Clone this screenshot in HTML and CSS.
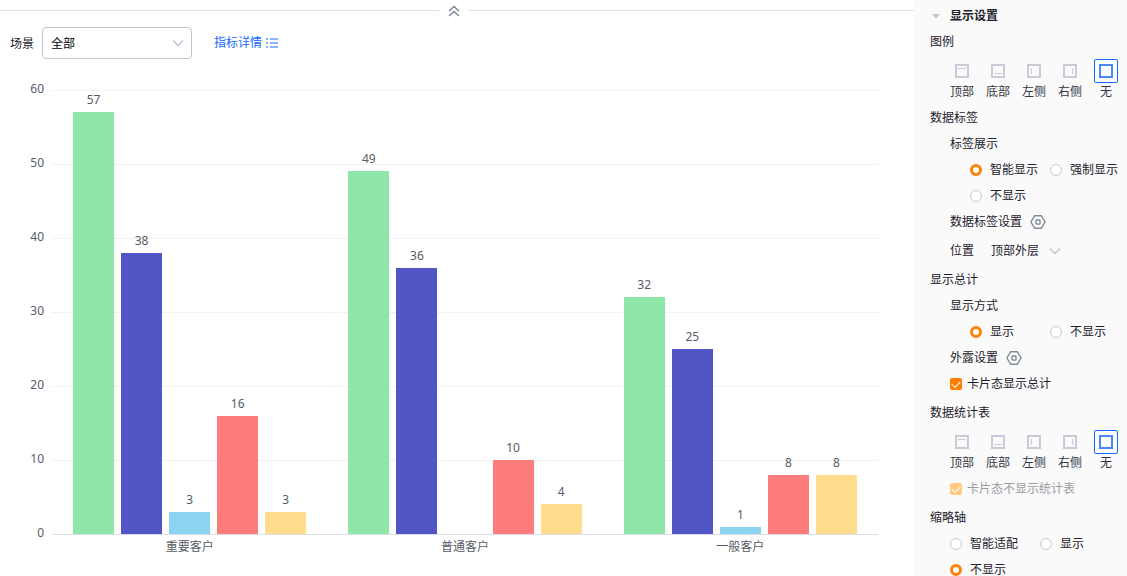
FILE: index.html
```
<!DOCTYPE html>
<html lang="zh">
<head>
    <meta charset="UTF-8">
    <meta name="viewport" content="width=device-width, initial-scale=1.0">
    <title>图表显示设置</title>
    <link rel="stylesheet" href="styles.css">
</head>
<body>
    <!-- 公用图标 -->
    <svg class="icon-defs" aria-hidden="true">
        <symbol id="icon-down" viewBox="0 0 12 8"><path d="M1 1.5l5 5 5-5"/></symbol>
        <symbol id="icon-set" viewBox="0 0 16 16"><path d="M4.6 1.7h6.8L15 8l-3.6 6.3H4.6L1 8z"/><circle cx="8" cy="8" r="2.2"/></symbol>
        <symbol id="icon-none" viewBox="0 0 14 14"><path d="M1 1h12v12H1z"/></symbol>
        <symbol id="icon-top" viewBox="0 0 14 14"><path d="M1 1h12v12H1z"/><path class="thin" d="M3 4.5h8"/></symbol>
        <symbol id="icon-bottom" viewBox="0 0 14 14"><path d="M1 1h12v12H1z"/><path class="thin" d="M3 9.5h8"/></symbol>
        <symbol id="icon-left" viewBox="0 0 14 14"><path d="M1 1h12v12H1z"/><path class="thin" d="M4.5 4v6"/></symbol>
        <symbol id="icon-right" viewBox="0 0 14 14"><path d="M1 1h12v12H1z"/><path class="thin" d="M9.5 4v6"/></symbol>
    </svg>

    <main class="main">
        <div class="divider">
            <button type="button" class="collapse" aria-label="收起">
                <svg width="12" height="12" viewBox="0 0 12 12"><path d="M1 6l5-4.5L11 6M1 11l5-4.5L11 11"/></svg>
            </button>
        </div>

        <div class="filter">
            <label for="scene">场景</label>
            <div class="select-box">
                <select id="scene"><option>全部</option></select>
                <svg class="arrow" width="12" height="8"><use href="#icon-down"/></svg>
            </div>
            <a class="detail" href="#">指标详情
                <svg width="12" height="10" viewBox="0 0 12 10"><path d="M0 1h2M0 5h2M0 9h2M4 1h8M4 5h8M4 9h8"/></svg>
            </a>
        </div>

        <div class="chart">
            <div class="lines">
                <div class="line"><span>60</span></div>
                <div class="line"><span>50</span></div>
                <div class="line"><span>40</span></div>
                <div class="line"><span>30</span></div>
                <div class="line"><span>20</span></div>
                <div class="line"><span>10</span></div>
                <div class="line axis"><span>0</span></div>
            </div>
            <div class="groups">
                <div class="group">
                    <div class="col"><span>57</span><div class="bar green" style="--v: 57"></div></div>
                    <div class="col"><span>38</span><div class="bar purple" style="--v: 38"></div></div>
                    <div class="col"><span>3</span><div class="bar blue" style="--v: 3"></div></div>
                    <div class="col"><span>16</span><div class="bar red" style="--v: 16"></div></div>
                    <div class="col"><span>3</span><div class="bar yellow" style="--v: 3"></div></div>
                </div>
                <div class="group">
                    <div class="col"><span>49</span><div class="bar green" style="--v: 49"></div></div>
                    <div class="col"><span>36</span><div class="bar purple" style="--v: 36"></div></div>
                    <div class="col"></div>
                    <div class="col"><span>10</span><div class="bar red" style="--v: 10"></div></div>
                    <div class="col"><span>4</span><div class="bar yellow" style="--v: 4"></div></div>
                </div>
                <div class="group">
                    <div class="col"><span>32</span><div class="bar green" style="--v: 32"></div></div>
                    <div class="col"><span>25</span><div class="bar purple" style="--v: 25"></div></div>
                    <div class="col"><span>1</span><div class="bar blue" style="--v: 1"></div></div>
                    <div class="col"><span>8</span><div class="bar red" style="--v: 8"></div></div>
                    <div class="col"><span>8</span><div class="bar yellow" style="--v: 8"></div></div>
                </div>
            </div>
            <div class="names">
                <div>重要客户</div>
                <div>普通客户</div>
                <div>一般客户</div>
            </div>
        </div>
    </main>

    <aside class="side">
        <h2 class="side-title">
            <svg width="10" height="6" viewBox="0 0 10 6"><path d="M1 1h8L5 5.5z"/></svg>
            显示设置
        </h2>

        <section>
            <h3>图例</h3>
            <div class="places">
                <button type="button"><i><svg><use href="#icon-top"/></svg></i>顶部</button>
                <button type="button"><i><svg><use href="#icon-bottom"/></svg></i>底部</button>
                <button type="button"><i><svg><use href="#icon-left"/></svg></i>左侧</button>
                <button type="button"><i><svg><use href="#icon-right"/></svg></i>右侧</button>
                <button type="button" class="active" aria-pressed="true"><i><svg><use href="#icon-none"/></svg></i>无</button>
            </div>
        </section>

        <section>
            <h3>数据标签</h3>
            <div class="sub">
                <div class="row">标签展示</div>
                <div class="radios indent">
                    <label><input type="radio" name="label" checked>智能显示</label>
                    <label><input type="radio" name="label">强制显示</label>
                    <label><input type="radio" name="label">不显示</label>
                </div>
                <div class="row">数据标签设置
                    <button type="button" class="set" aria-label="数据标签设置"><svg width="16" height="16"><use href="#icon-set"/></svg></button>
                </div>
                <div class="row position">
                    <label for="position">位置</label>
                    <div class="select-plain">
                        <select id="position"><option>顶部外层</option></select>
                        <svg class="arrow" width="12" height="8"><use href="#icon-down"/></svg>
                    </div>
                </div>
            </div>
        </section>

        <section>
            <h3>显示总计</h3>
            <div class="sub">
                <div class="row">显示方式</div>
                <div class="radios indent">
                    <label><input type="radio" name="total" checked>显示</label>
                    <label><input type="radio" name="total">不显示</label>
                </div>
                <div class="row">外露设置
                    <button type="button" class="set" aria-label="外露设置"><svg width="16" height="16"><use href="#icon-set"/></svg></button>
                </div>
                <label class="row check"><input type="checkbox" checked>卡片态显示总计</label>
            </div>
        </section>

        <section class="spaced">
            <h3>数据统计表</h3>
            <div class="places">
                <button type="button"><i><svg><use href="#icon-top"/></svg></i>顶部</button>
                <button type="button"><i><svg><use href="#icon-bottom"/></svg></i>底部</button>
                <button type="button"><i><svg><use href="#icon-left"/></svg></i>左侧</button>
                <button type="button"><i><svg><use href="#icon-right"/></svg></i>右侧</button>
                <button type="button" class="active" aria-pressed="true"><i><svg><use href="#icon-none"/></svg></i>无</button>
            </div>
            <div class="sub">
                <label class="row check disabled"><input type="checkbox" checked disabled>卡片态不显示统计表</label>
            </div>
        </section>

        <section class="spaced">
            <h3>缩略轴</h3>
            <div class="sub">
                <div class="radios wide">
                    <label><input type="radio" name="zoom">智能适配</label>
                    <label><input type="radio" name="zoom">显示</label>
                    <label><input type="radio" name="zoom" checked>不显示</label>
                </div>
            </div>
        </section>
    </aside>
</body>
</html>
```

FILE: styles.css
```
* {
    box-sizing: border-box;
}

body {
    margin: 0;
    display: flex;
    height: 100vh;
    overflow: hidden;
    font-family: "Noto Sans", "Noto Sans CJK SC", sans-serif;
    font-size: 12px;
    line-height: 16px;
    color: #1d212c;
    background: #fff;
}

button,
select {
    appearance: none;
    margin: 0;
    padding: 0;
    border: 0;
    background: none;
    color: inherit;
    font: inherit;
    cursor: pointer;
}

svg {
    fill: none;
    stroke: currentColor;
}

.icon-defs {
    position: absolute;
    width: 0;
    height: 0;
}

/* 左侧图表区 */
.main {
    flex: 1;
    min-width: 0;
    display: flex;
    flex-direction: column;
    overflow: hidden;
}

.divider {
    display: flex;
    align-items: center;
    height: 21px;
    margin-left: -6px;
}

.divider::before,
.divider::after {
    content: "";
    flex: 1;
    height: 1px;
    background: #dddfe8;
}

.collapse {
    display: flex;
    justify-content: center;
    width: 30px;
    color: #7a8499;
}

.collapse svg {
    stroke-width: 1.4;
}

.filter {
    display: flex;
    align-items: center;
    gap: 8px;
    padding: 6px 10px 0;
}

.filter label {
    padding-top: 2px;
}

.select-box,
.select-plain {
    display: grid;
    align-items: center;
}

.select-box select,
.select-plain select,
.arrow {
    grid-area: 1 / 1;
}

.arrow {
    justify-self: end;
    color: #bfc3cf;
    stroke-width: 1.4;
    pointer-events: none;
}

.select-box {
    width: 150px;
}

.select-box select {
    width: 100%;
    height: 32px;
    padding: 2px 8px 0;
    border: 1px solid #c1c4d1;
    border-radius: 4px;
    color: #000;
}

.select-box .arrow {
    margin-right: 8px;
}

.detail {
    display: flex;
    align-items: center;
    gap: 4px;
    margin-left: 14px;
    color: #1269ff;
    text-decoration: none;
}

/* 柱状图 */
.chart {
    flex: 1;
    display: grid;
    grid-template-rows: 1fr auto;
    padding: 31px 36px 21px 0;
    color: #575b66;
}

.lines,
.groups {
    grid-area: 1 / 1;
}

.lines {
    display: flex;
    flex-direction: column;
    justify-content: space-between;
}

.line {
    display: flex;
    align-items: center;
    gap: 8px;
    height: 1px;
}

.line span {
    width: 44px;
    padding-bottom: 4px;
    text-align: right;
}

.line::after {
    content: "";
    flex: 1;
    height: 1px;
    background: #f1f2f5;
}

.axis::after {
    background: #dddfe8;
}

.groups {
    display: flex;
    margin-left: 52px;
    padding-bottom: 1px;
}

.group {
    flex: 1;
    display: flex;
    gap: 7px;
    padding: 0 21px;
}

.col {
    flex: 1;
    display: flex;
    flex-direction: column;
    justify-content: flex-end;
    text-align: center;
}

.col span {
    margin-bottom: 4px;
}

.bar {
    flex: none;
    height: calc(var(--v) / 60 * 100%);
}

.green {
    background: #8ee7a8;
}

.purple {
    background: #5155c5;
}

.blue {
    background: #8bd4f1;
}

.red {
    background: #ff7c7c;
}

.yellow {
    background: #ffdd8c;
}

.names {
    display: flex;
    margin-left: 52px;
    padding-top: 4px;
    text-align: center;
}

.names div {
    flex: 1;
}

/* 右侧设置面板 */
.side {
    width: 213px;
    flex: none;
    padding: 3px 0 0 16px;
    overflow: hidden;
    background: #fafafa;
}

.side h2,
.side h3 {
    margin: 0;
    font-size: 12px;
    line-height: 26px;
}

.side h3 {
    font-weight: normal;
}

.side-title {
    display: flex;
    align-items: center;
    gap: 9px;
}

.side-title svg {
    margin-left: 1px;
    fill: #c1c5cf;
    stroke: none;
}

.spaced {
    margin-top: 3px;
}

.sub {
    padding-left: 20px;
}

.row {
    display: flex;
    align-items: center;
    gap: 8px;
    height: 26px;
}

.places {
    display: flex;
    padding: 4px 0 5px 14px;
}

.places button {
    display: flex;
    flex-direction: column;
    align-items: center;
    gap: 1px;
    width: 36px;
    color: #333743;
}

.places i {
    display: flex;
    align-items: center;
    justify-content: center;
    width: 24px;
    height: 24px;
    border: 1px solid transparent;
    border-radius: 2px;
    color: #c9ccd8;
}

.places svg {
    width: 14px;
    height: 14px;
    stroke-width: 2;
}

.thin {
    stroke-width: 1;
}

.places .active i {
    border-color: #1269ff;
    color: #4a86ff;
    background: #fff;
}

.radios {
    display: grid;
    grid-template-columns: 80px 1fr;
}

.indent {
    padding-left: 20px;
}

.wide {
    grid-template-columns: 90px 1fr;
}

.radios label {
    display: flex;
    align-items: center;
    gap: 8px;
    height: 26px;
    white-space: nowrap;
}

input {
    appearance: none;
    flex: none;
    width: 12px;
    height: 12px;
    margin: 0;
    background: #fff;
}

input[type="radio"] {
    border: 1px solid #c5c8d3;
    border-radius: 50%;
}

input[type="radio"]:checked {
    border: 3px solid #ff8208;
}

input[type="checkbox"] {
    display: grid;
    place-items: center;
    border-radius: 2px;
    background: #ff8000;
}

/* 对勾 */
input[type="checkbox"]::before {
    content: "";
    width: 7px;
    height: 4px;
    margin-bottom: 2px;
    border: solid #fff;
    border-width: 0 0 1px 1px;
    transform: rotate(-45deg);
}

.check {
    gap: 5px;
}

.disabled {
    color: #999ca4;
}

.disabled input {
    background: #ffca80;
}

.set {
    display: flex;
    color: #7f8c99;
    stroke-width: 1.4;
}

.position {
    height: 32px;
    gap: 17px;
}

.select-plain {
    width: 70px;
}
```
